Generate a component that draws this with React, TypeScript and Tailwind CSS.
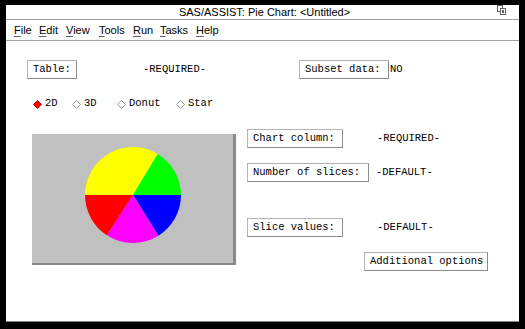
import React from 'react';

const mono = { fontFamily: '"Liberation Mono", "DejaVu Sans Mono", monospace' };

const menus = [
  { label: 'File', w: 'w-[25px]' },
  { label: 'Edit', w: 'w-[27px]' },
  { label: 'View', w: 'w-[33px]' },
  { label: 'Tools', w: 'w-[34px]' },
  { label: 'Run', w: 'w-[27px]' },
  { label: 'Tasks', w: 'w-[36px]' },
  { label: 'Help', w: 'w-[30px]' },
];

const styles = [
  { label: '2D', w: 'w-[39px]', on: true },
  { label: '3D', w: 'w-[45px]', on: false },
  { label: 'Donut', w: 'w-[59px]', on: false },
  { label: 'Star', w: 'w-[50px]', on: false },
];

function Btn({ label, w, className = '' }: { label: string; w: string; className?: string }) {
  return (
    <div
      className={`${w} h-[19px] flex items-center pl-[5px] bg-white border border-[#b4b4b4] border-r-[#8c8c8c] border-b-[#8c8c8c] text-[10.5px] text-black whitespace-nowrap ${className}`}
      style={mono}
    >
      {label}
    </div>
  );
}

function Diamond({ on }: { on: boolean }) {
  return (
    <svg width="9" height="9" viewBox="0 0 9 9" className="shrink-0">
      <polygon
        points="4.5,0.5 8.5,4.5 4.5,8.5 0.5,4.5"
        fill={on ? '#ff0000' : '#ffffff'}
        stroke={on ? '#d40000' : '#9a9a9a'}
        strokeWidth="1"
      />
    </svg>
  );
}

function Pie() {
  return (
    <svg width="96" height="96" viewBox="0 0 96 96">
      <path d="M48 48 L72.7 6.9 A48 48 0 0 0 0 48 Z" fill="#ffff00" />
      <path d="M48 48 L96 48 A48 48 0 0 0 72.7 6.9 Z" fill="#00ff00" />
      <path d="M48 48 L73.4 88.7 A48 48 0 0 0 96 48 Z" fill="#0000ff" />
      <path d="M48 48 L21.9 88.3 A48 48 0 0 0 73.4 88.7 Z" fill="#ff00ff" />
      <path d="M48 48 L0 48 A48 48 0 0 0 21.9 88.3 Z" fill="#ff0000" />
    </svg>
  );
}

export default function App() {
  return (
    <div className="w-[525px] h-[329px] bg-black pt-[5px] pl-[6px] pr-[6px] pb-[7px]">
      <div className="w-full h-full bg-white flex flex-col border-b border-[#808080]">
        {/* title bar */}
        <div
          className="relative h-[15px] shrink-0 flex items-center justify-center border-b border-[#a0a0a0] text-[11px] text-black"
          style={{ fontFamily: '"Liberation Sans", Arial, sans-serif' }}
        >
          <span className="ml-[4px]">SAS/ASSIST: Pie Chart: &lt;Untitled&gt;</span>
          <svg width="9" height="10" viewBox="0 0 9 10" className="absolute right-[13px] top-0">
            <rect x="0.5" y="0.5" width="5" height="6" fill="white" stroke="#606060" />
            <rect x="3.5" y="3.5" width="5" height="6" fill="white" stroke="#606060" />
            <rect x="5" y="5" width="2" height="3" fill="#606060" />
          </svg>
        </div>

        {/* menu bar */}
        <div
          className="h-[21px] shrink-0 flex items-center pl-[8px] border-b border-[#a0a0a0] text-[11px] text-black"
          style={{ fontFamily: '"Liberation Sans", Arial, sans-serif' }}
        >
          {menus.map((m) => (
            <span key={m.label} className={m.w}>
              <span className="underline underline-offset-2 decoration-[#606060]">{m.label[0]}</span>
              {m.label.slice(1)}
            </span>
          ))}
        </div>

        {/* body */}
        <div className="flex flex-col pl-[21px] text-[10.5px] text-black" style={mono}>
          <div className="mt-[19px] h-[19px] flex items-center">
            <Btn label="Table:" w="w-[50px]" />
            <span className="ml-[66px] w-[156px]">-REQUIRED-</span>
            <Btn label="Subset data:" w="w-[90px]" />
            <span className="ml-[1px]">NO</span>
          </div>

          <div className="mt-[19px] h-[12px] flex items-center pl-[6px]">
            {styles.map((s) => (
              <div key={s.label} className={`${s.w} flex items-center gap-[3px]`}>
                <Diamond on={s.on} />
                <span>{s.label}</span>
              </div>
            ))}
          </div>

          <div className="mt-[19px] flex items-start">
            <div className="ml-[5px] mt-[5px] w-[204px] h-[131px] bg-[#c0c0c0] border-r-[3px] border-b-[2px] border-[#8a8a8a] flex justify-center pt-[13px]">
              <Pie />
            </div>

            <div className="ml-[11px] flex flex-col">
              <div className="h-[19px] flex items-center">
                <div className="w-[130px]">
                  <Btn label="Chart column:" w="w-[96px]" />
                </div>
                <span>-REQUIRED-</span>
              </div>
              <div className="mt-[15px] h-[19px] flex items-center">
                <div className="w-[129px]">
                  <Btn label="Number of slices:" w="w-[122px]" />
                </div>
                <span>-DEFAULT-</span>
              </div>
              <div className="mt-[36px] h-[19px] flex items-center">
                <div className="w-[130px]">
                  <Btn label="Slice values:" w="w-[96px]" />
                </div>
                <span>-DEFAULT-</span>
              </div>
              <div className="mt-[15px] pl-[117px]">
                <Btn label="Additional options" w="w-[124px]" />
              </div>
            </div>
          </div>
        </div>
      </div>
    </div>
  );
}
